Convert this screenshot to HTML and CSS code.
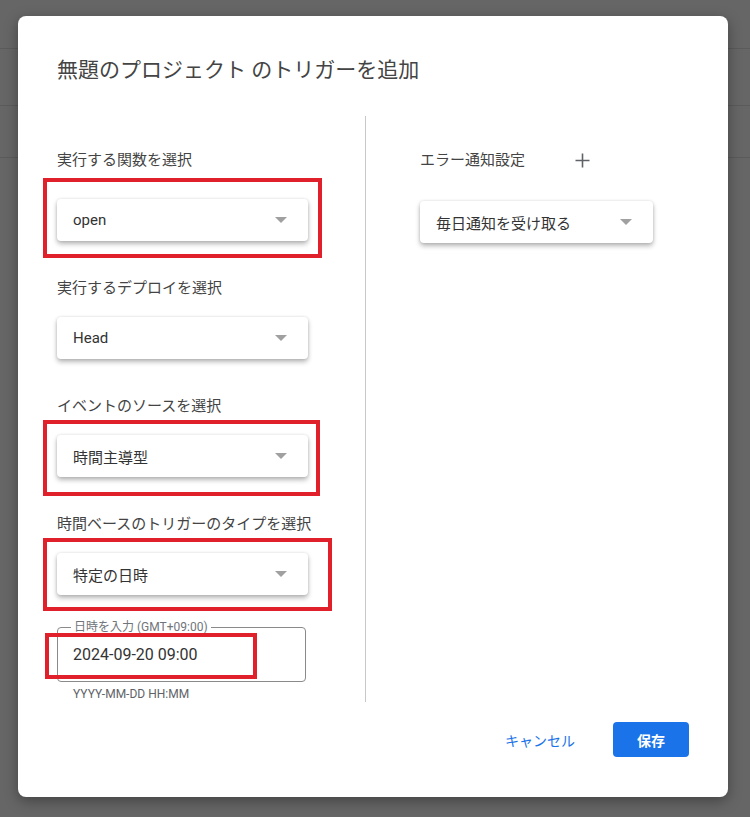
FILE: index.html
```html
<!DOCTYPE html>
<html lang="ja">
<head>
  <meta charset="UTF-8" />
  <meta name="viewport" content="width=device-width, initial-scale=1.0"/>
  <title>トリガーを追加</title>

  <link rel="stylesheet" href="styles.css">
</head>

<body>
  <div class="dialogo">
    <h1 class="titulo">無題のプロジェクト のトリガーを追加</h1>

    <div class="columnas">
      <div class="col-izq">
        <div class="etiqueta primera">実行する関数を選択</div>
        <div class="selector primero"><span>open</span><i class="flecha"></i></div>

        <div class="etiqueta">実行するデプロイを選択</div>
        <div class="selector"><span>Head</span><i class="flecha"></i></div>

        <div class="etiqueta">イベントのソースを選択</div>
        <div class="selector"><span>時間主導型</span><i class="flecha"></i></div>

        <div class="etiqueta">時間ベースのトリガーのタイプを選択</div>
        <div class="selector"><span>特定の日時</span><i class="flecha"></i></div>

        <fieldset class="campo">
          <legend>日時を入力 (GMT+09:00)</legend>
          <div class="valor">2024-09-20 09:00</div>
        </fieldset>
        <div class="ayuda">YYYY-MM-DD HH:MM</div>
      </div>

      <div class="col-der">
        <div class="fila-error">
          <span class="etiqueta">エラー通知設定</span>
          <svg class="mas" width="15" height="15" viewBox="0 0 15 15">
            <path d="M7.5 0.5v14M0.5 7.5h14" stroke="#5f6368" stroke-width="1.6"/>
          </svg>
        </div>
        <div class="selector corto"><span>毎日通知を受け取る</span><i class="flecha"></i></div>
      </div>
    </div>

    <div class="acciones">
      <button class="btn-texto">キャンセル</button>
      <button class="btn-guardar">保存</button>
    </div>

    <!-- marcas rojas de la captura -->
    <div class="marca m1"></div>
    <div class="marca m2"></div>
    <div class="marca m3"></div>
    <div class="marca m4"></div>
  </div>
</body>
</html>
```
FILE: styles.css
```css
body {
  margin: 0;
  padding: 16px 22px 20px 18px;
  font-family: Roboto, "Noto Sans CJK JP", sans-serif;
  background-color: #666;
  background-image:
    linear-gradient(#5b5b5b, #5b5b5b),
    linear-gradient(#5b5b5b, #5b5b5b),
    linear-gradient(#5b5b5b, #5b5b5b);
  background-size: 100% 1px;
  background-position: 0 48px, 0 105px, 0 157px;
  background-repeat: no-repeat;
}

.dialogo {
  position: relative;
  width: 710px;
  height: 781px;
  box-sizing: border-box;
  padding: 40px 39px 40px 39px;
  background: #fff;
  border-radius: 8px;
  box-shadow: 0 4px 14px rgba(0,0,0,0.35);
}

.titulo {
  margin: 0;
  font-size: 21px;
  line-height: 28px;
  font-weight: 400;
  color: #444;
}

.columnas {
  display: flex;
  margin-top: 32px;
  height: 586px;
}

.col-izq {
  width: 308px;
  padding-top: 34px;
}

.col-der {
  flex: 1;
  border-left: 1px solid #c8c8c8;
  padding-left: 54px;
  padding-top: 34px;
}

.etiqueta {
  font-size: 15px;
  line-height: 20px;
  color: #444;
  margin-top: 37px;
}

.etiqueta.primera {
  margin-top: 0;
}

.selector {
  display: flex;
  align-items: center;
  justify-content: space-between;
  width: 251px;
  height: 42px;
  box-sizing: border-box;
  padding: 0 21px 0 16px;
  margin-top: 19px;
  background: #fff;
  border-radius: 4px;
  box-shadow: 0 3px 5px rgba(0,0,0,0.28), 0 0 3px rgba(0,0,0,0.12);
  font-size: 15px;
  color: #333;
}

.selector.primero {
  margin-top: 29px;
}

.selector.corto {
  width: 233px;
  margin-top: 31px;
}

.flecha {
  width: 0;
  height: 0;
  border-left: 6px solid transparent;
  border-right: 6px solid transparent;
  border-top: 6px solid #a0a0a0;
}

.fila-error {
  display: flex;
  align-items: center;
  height: 20px;
}

.fila-error .etiqueta {
  margin-top: 0;
}

.mas {
  margin-left: 50px;
}

.campo {
  width: 249px;
  box-sizing: border-box;
  margin: 25px 0 0 0;
  padding: 11px 15px 16px 15px;
  border: 1px solid #8a8a8a;
  border-radius: 4px;
}

.campo legend {
  padding: 0 3px;
  margin-left: -2px;
  font-size: 12px;
  line-height: 14px;
  color: #70757a;
}

.valor {
  font-size: 16px;
  line-height: 20px;
  color: #333;
}

.ayuda {
  margin-top: 4px;
  padding-left: 16px;
  font-size: 12px;
  line-height: 16px;
  color: #5f6368;
}

.acciones {
  display: flex;
  justify-content: flex-end;
  align-items: center;
  margin-top: 20px;
  gap: 22px;
}

.acciones button {
  font-family: Roboto, "Noto Sans CJK JP", sans-serif;
  font-size: 14px;
  height: 35px;
  border: none;
  border-radius: 4px;
  cursor: pointer;
}

.btn-texto {
  background: none;
  color: #1a73e8;
  padding: 0 16px;
}

.btn-guardar {
  width: 76px;
  background: #1a73e8;
  color: #fff;
  font-weight: 700;
}

.marca {
  position: absolute;
  border: 4px solid #e0202b;
  box-sizing: border-box;
}

.m1 { left: 25px; top: 162px; width: 279px; height: 80px; }
.m2 { left: 25px; top: 404px; width: 277px; height: 76px; }
.m3 { left: 25px; top: 522px; width: 289px; height: 73px; }
.m4 { left: 27px; top: 617px; width: 212px; height: 46px; }
```
